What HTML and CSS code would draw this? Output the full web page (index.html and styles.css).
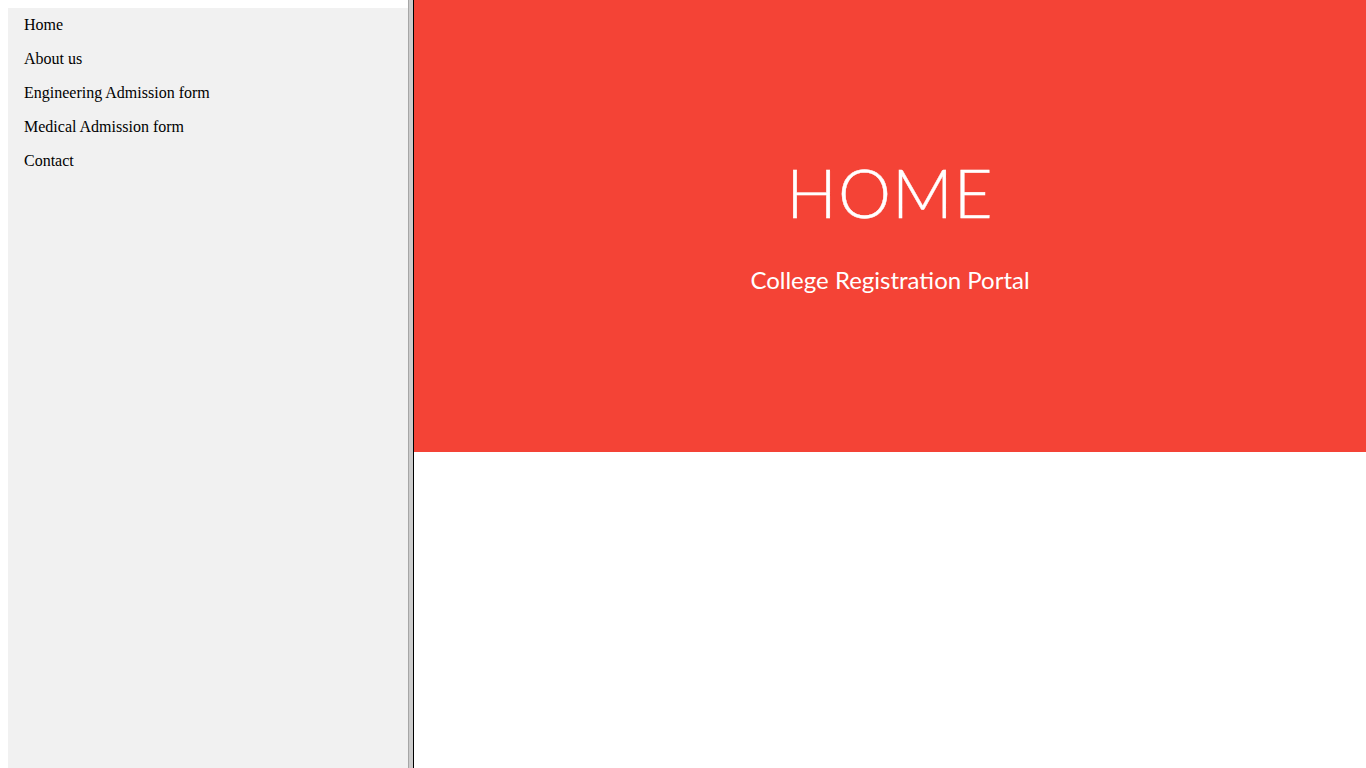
FILE: index.html
```html
<!DOCTYPE html>
<html>
<head>
<meta charset="utf-8">
<title>College Registration Portal</title>
<link rel="stylesheet" href="styles.css">
</head>
<body>
<div class="page">
  <div class="side-wrap">
    <nav class="sidebar">
      <a class="nav-link" href="#">Home</a>
      <a class="nav-link" href="#">About us</a>
      <a class="nav-link" href="#">Engineering Admission form</a>
      <a class="nav-link" href="#">Medical Admission form</a>
      <a class="nav-link" href="#">Contact</a>
    </nav>
  </div>
  <div class="divider"></div>
  <main class="main">
    <header class="hero">
      <h1 class="hero-title">HOME</h1>
      <p class="hero-sub">College Registration Portal</p>
    </header>
  </main>
</div>
</body>
</html>
```
FILE: styles.css
```css
html, body {
  margin: 0;
  padding: 0;
  height: 100%;
  background: #ffffff;
}
.page {
  display: flex;
  height: 768px;
  overflow: hidden;
}
.side-wrap {
  width: 400px;
  padding: 8px 0 0 8px;
  flex: none;
  display: flex;
}
.sidebar {
  flex: 1;
  background: #f1f1f1;
  display: flex;
  flex-direction: column;
}
.nav-link {
  display: block;
  padding: 8px 16px;
  font-family: "Liberation Serif", "Times New Roman", serif;
  font-size: 16px;
  line-height: 18px;
  color: #000000;
  text-decoration: none;
}
.divider {
  flex: none;
  width: 4px;
  background: #cccccc;
  border-left: 1px solid #a6a6a6;
  border-right: 1px solid #000000;
}
.main {
  flex: 1;
  display: flex;
  flex-direction: column;
}
.hero {
  height: 452px;
  background: #f44336;
  color: #ffffff;
  text-align: center;
  font-family: Lato, "Open Sans", sans-serif;
  padding-top: 151px;
  box-sizing: border-box;
}
.hero-title {
  margin: 0;
  font-weight: 300;
  font-size: 67px;
  line-height: 82px;
  letter-spacing: 1px;
  -webkit-text-stroke: 0.4px #ffffff;
}
.hero-sub {
  margin: 32px 0 0;
  font-size: 24px;
  line-height: 30px;
  font-weight: 400;
}
```
